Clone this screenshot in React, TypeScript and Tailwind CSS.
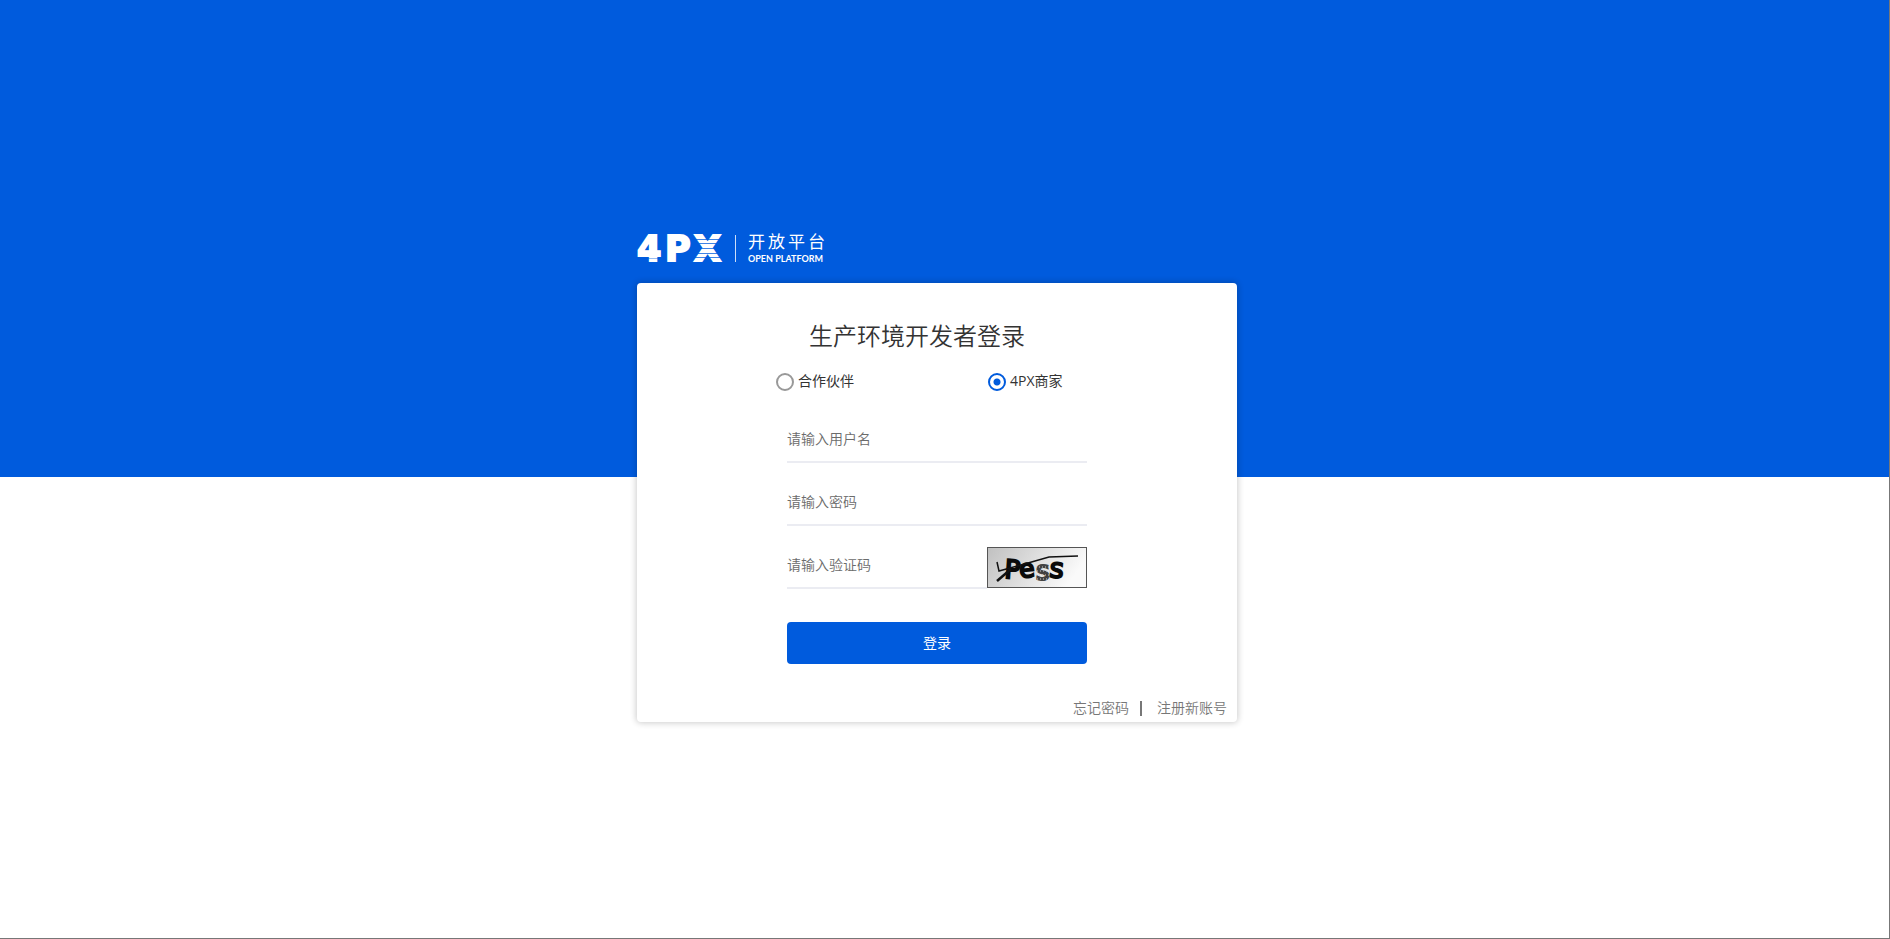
import React, { useState } from 'react';

const Logo: React.FC = () => (
  <svg
    width="200"
    height="48"
    viewBox="0 -8 200 48"
    fill="#fff"
    role="img"
    aria-label="4PX 开放平台"
    className="overflow-visible"
  >
    <g fontFamily="'DejaVu Sans'" fontWeight="700" fontSize="35" stroke="#fff" strokeWidth="2">
      <text x="0" y="28">4</text>
      <text x="28" y="28">P</text>
      <text x="57" y="28">X</text>
    </g>
    {/* stripes that cut through the wordmark */}
    <g fill="#005bdd" opacity="0.75">
      <rect x="56" y="6" width="31" height="1" />
      <rect x="56" y="10" width="31" height="1" />
      <rect x="56" y="15" width="31" height="1" />
      <rect x="56" y="20" width="31" height="1" />
      <rect x="56" y="24" width="31" height="1" />
    </g>
    <rect x="0" y="25" width="28" height="1" fill="#005bdd" opacity="0.4" />
    <rect x="98" y="2" width="1" height="27" opacity="0.8" />
    <g fontFamily="'Noto Sans CJK SC', sans-serif" fontSize="17">
      <text x="111" y="15">开</text>
      <text x="131" y="15">放</text>
      <text x="151" y="15">平</text>
      <text x="171" y="15">台</text>
    </g>
    <text x="111" y="29" fontFamily="Lato, sans-serif" fontWeight="700" fontSize="9">
      OPEN PLATFORM
    </text>
  </svg>
);

const Captcha: React.FC = () => (
  <svg width="100" height="41" viewBox="0 0 100 41" className="block" role="img" aria-label="Pess">
    <defs>
      <linearGradient id="captchaBg" x1="0" y1="0" x2="1" y2="0.3">
        <stop offset="0" stopColor="#c0c0c0" />
        <stop offset="1" stopColor="#fafafa" />
      </linearGradient>
    </defs>
    <rect x="0.5" y="0.5" width="99" height="40" fill="url(#captchaBg)" stroke="#555" />
    <g fontFamily="'DejaVu Sans', sans-serif" fontWeight="400" stroke="#0a0a0a" fill="#0a0a0a" strokeWidth="2">
      <text x="17" y="31" fontSize="26" transform="rotate(4 17 31)">P</text>
      <text x="33" y="31" fontSize="25" transform="rotate(-6 33 31)">e</text>
      <text x="49" y="33" fontSize="26" stroke="#444" fill="#222">s</text>
      <text x="62" y="30" fontSize="27" transform="rotate(5 62 30)">s</text>
    </g>
    {/* grain over the third letter */}
    <g stroke="#ccc" strokeWidth="1" strokeDasharray="1 2">
      <path d="M49 20H64" />
      <path d="M50 24H64" />
      <path d="M49 28H64" />
      <path d="M50 32H64" />
    </g>
    <path d="M10 15L12 24L34 18L62 10L91 9" fill="none" stroke="#111" strokeWidth="1.5" />
    <path d="M10 34L24 22" fill="none" stroke="#111" strokeWidth="2.5" />
  </svg>
);

const accountTypes = [
  { value: 'partner', label: '合作伙伴' },
  { value: 'seller', label: '4PX商家' },
];

const inputClass =
  'block h-[46px] w-full border-b-2 border-[#ebecf2] bg-transparent pb-0.5 text-sm font-[350] text-[#333] placeholder-[#6b6b6b] outline-none';

const App: React.FC = () => {
  const [accountType, setAccountType] = useState('seller');
  const [formData, setFormData] = useState({
    username: '',
    password: '',
    code: '',
  });

  const handleChange = (e: React.ChangeEvent<HTMLInputElement>) => {
    const { name, value } = e.target;
    setFormData({
      ...formData,
      [name]: value,
    });
  };

  const handleSubmit = (e: React.FormEvent) => {
    e.preventDefault();
  };

  return (
    <div className="min-h-screen border-r border-b border-[#777] bg-[linear-gradient(#005bdd_477px,#fff_477px)] pt-[225px] pr-[15px] font-['Open_Sans','Noto_Sans_CJK_SC',sans-serif] text-[#333]">
      <main className="mx-auto max-w-[600px]">
        <header className="mb-[10px]">
          <a href="#" className="block h-12">
            <Logo />
          </a>
        </header>

        <div className="rounded bg-white px-2 pt-[37px] pb-0.5 shadow-[0_0_6px_1px_rgba(0,0,0,0.2)]">
          <h1 className="pr-10 text-center text-2xl leading-8 font-[350]">生产环境开发者登录</h1>

          <form onSubmit={handleSubmit} className="mx-auto max-w-[300px]">
            <fieldset aria-label="账号类型" className="-ml-[11px] mt-5 grid grid-cols-[212px_auto]">
              {accountTypes.map((type) => (
                <label key={type.value} className="flex items-center gap-1 text-sm leading-[18px]">
                  <input
                    type="radio"
                    name="accountType"
                    value={type.value}
                    checked={accountType === type.value}
                    onChange={() => setAccountType(type.value)}
                    className="size-[18px] appearance-none rounded-full border-2 border-[#999] checked:border-[#005bdd] checked:bg-[radial-gradient(circle,#005bdd_3px,#fff_4px)]"
                  />
                  <span className="pb-0.5">{type.label}</span>
                </label>
              ))}
            </fieldset>

            <div className="mt-[25px] space-y-[17px]">
              <input
                name="username"
                type="text"
                aria-label="用户名"
                placeholder="请输入用户名"
                value={formData.username}
                onChange={handleChange}
                className={inputClass}
              />
              <input
                name="password"
                type="password"
                aria-label="密码"
                placeholder="请输入密码"
                value={formData.password}
                onChange={handleChange}
                className={inputClass}
              />
              <div className="flex items-end">
                <input
                  name="code"
                  type="text"
                  aria-label="验证码"
                  placeholder="请输入验证码"
                  value={formData.code}
                  onChange={handleChange}
                  className={inputClass}
                />
                <button type="button" className="shrink-0 pb-px">
                  <Captcha />
                </button>
              </div>
            </div>

            <button type="submit" className="mt-[33px] h-[42px] w-full rounded bg-[#005bdd] text-sm text-white">
              登录
            </button>
          </form>

          <div className="mt-8 flex items-center justify-end pr-[2px] text-sm leading-6 font-[350] text-[#777]">
            <a href="#">忘记密码</a>
            <span className="mr-[15px] ml-[11px] h-[15px] w-[2px] bg-[#777]" />
            <a href="#">注册新账号</a>
          </div>
        </div>
      </main>
    </div>
  );
};

export default App;
